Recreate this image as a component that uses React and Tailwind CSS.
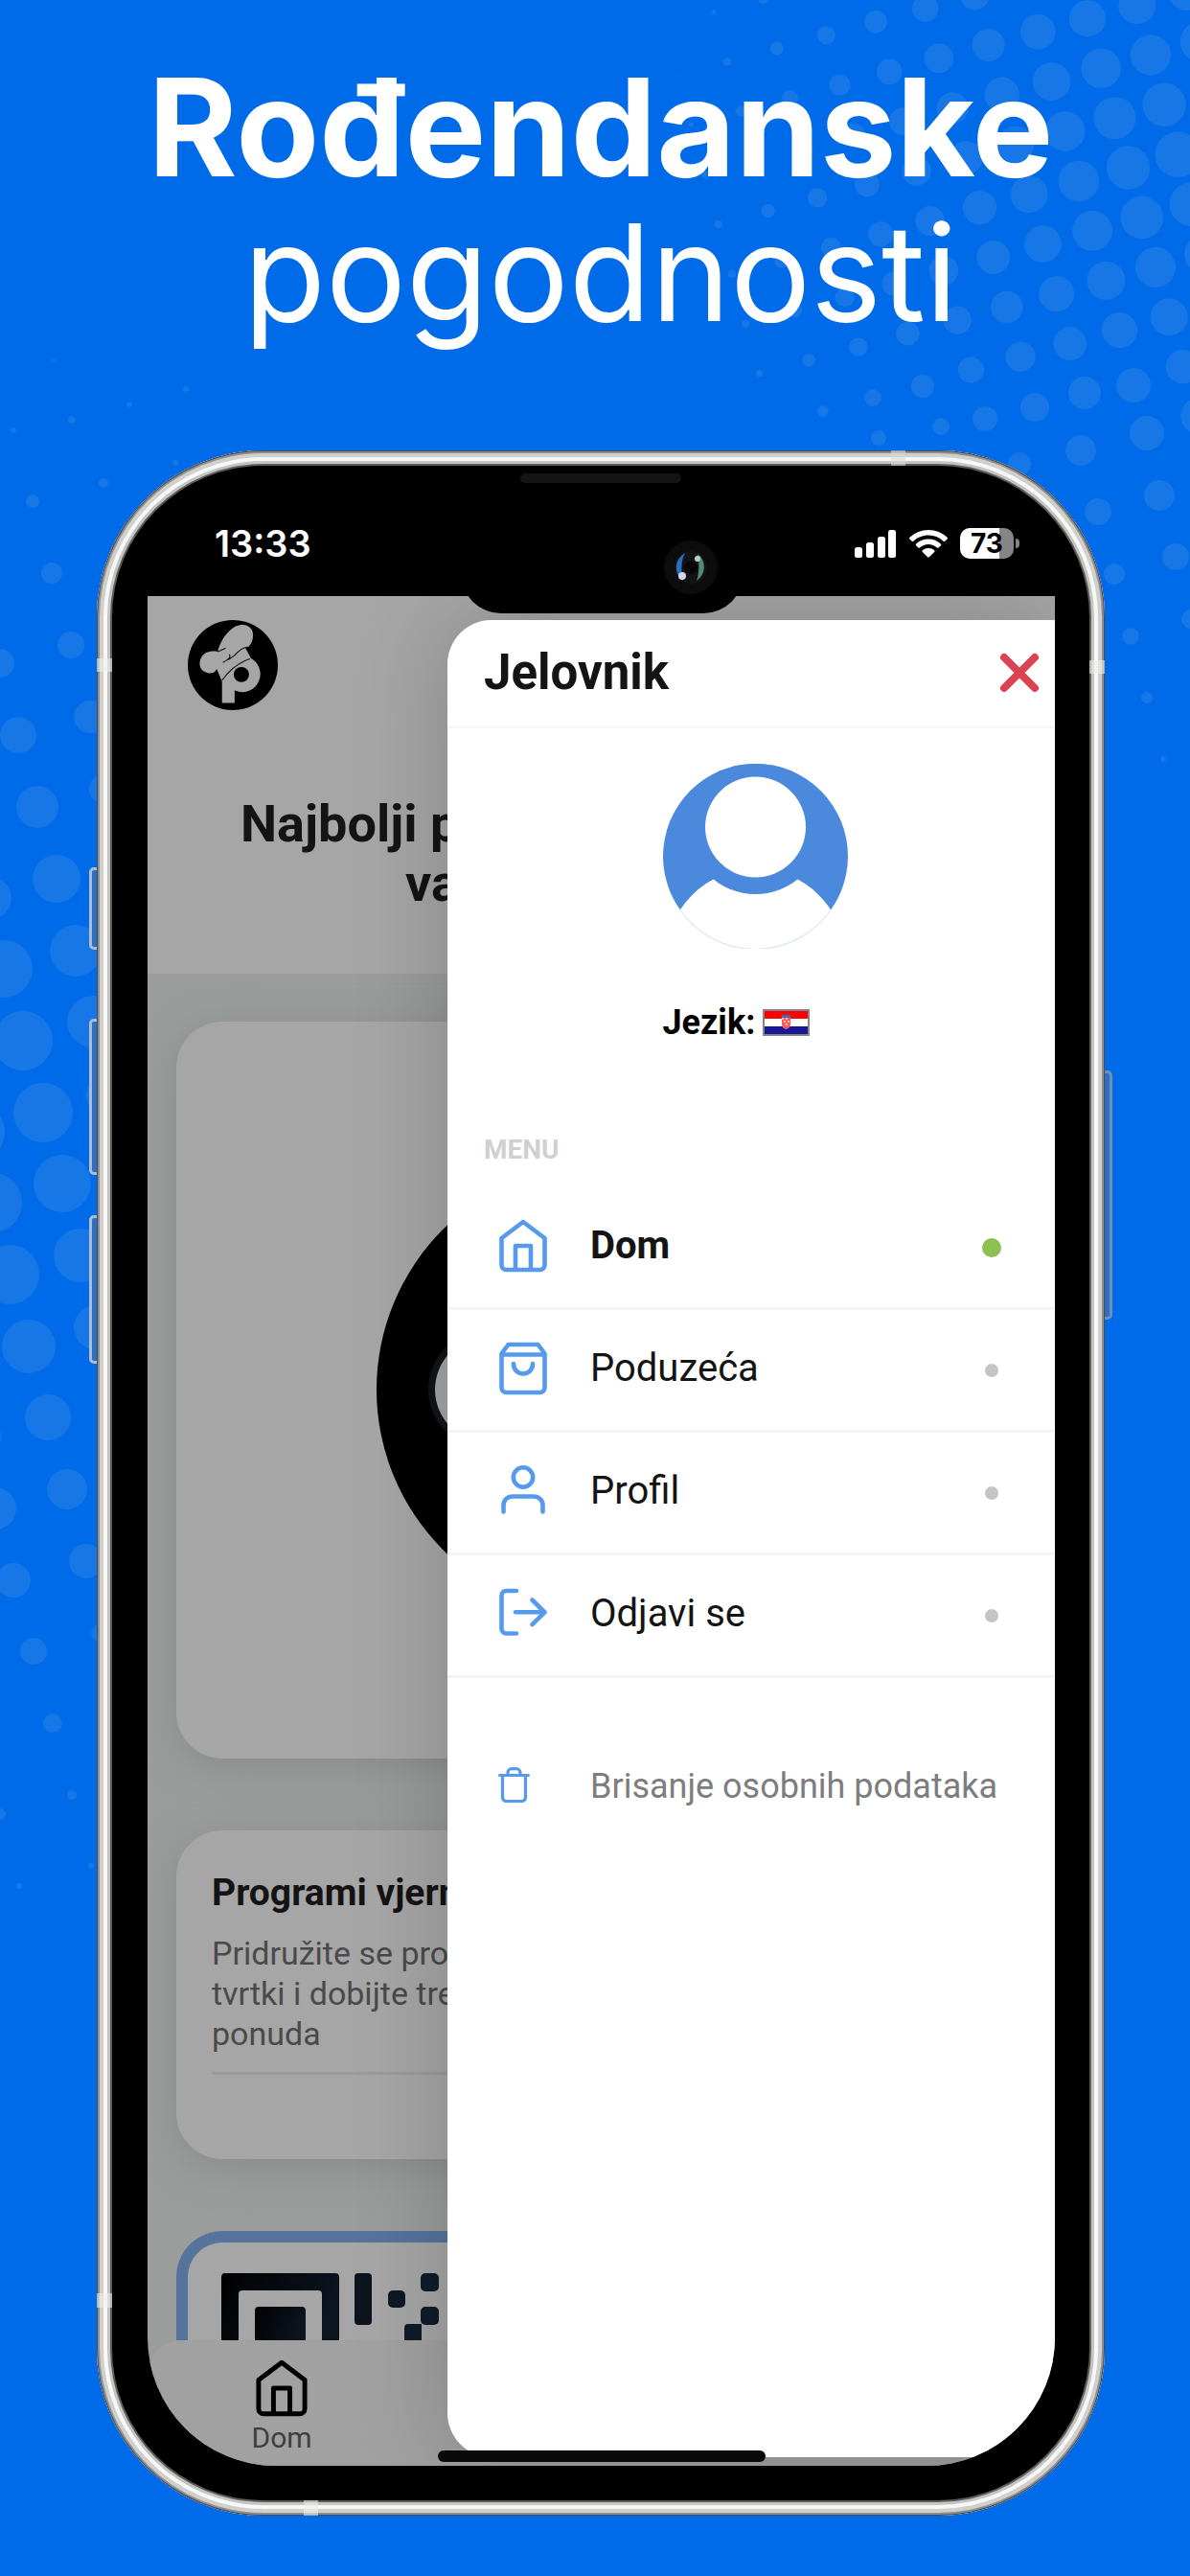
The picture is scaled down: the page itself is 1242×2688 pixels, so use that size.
import React from "react";

/* ---------- background halftone ---------- */

function latticeDots() {
  const dots = [];
  for (let j = -2; j < 9; j++) {
    for (let i = -6; i < 10; i++) {
      const x = 862.3 + i * 51.7 + j * 14.2;
      const y = 36.7 - i * 13.85 + j * 51.9;
      if (x < 680 || x > 1270 || y < -25 || y > 396) continue;
      const d = Math.hypot(x - 1235, y - 165);
      const r = 24 - 0.0196 * d - 0.0000432 * d * d;
      if (r > 1) dots.push([x, y, r]);
    }
  }
  return dots;
}

const lowerRightDots = [
  [963, 403, 12], [911, 415, 9], [859, 429, 6], [1080, 425, 15], [1132, 410, 17], [1183, 402, 18],
  [1028, 437, 13], [917, 457, 8], [982, 445, 9], [1197, 452, 18], [1250, 434, 18], [1128, 470, 16],
  [1064, 484, 12], [1210, 517, 16], [1146, 534, 14], [1227, 581, 14], [1163, 599, 11],
  [1243, 646, 10], [1180, 664, 9], [1197, 728, 6], [1214, 792, 3],
];

const leftDots = [
  [56, 376, 2], [194, 406, 3], [135, 422, 3], [75, 438, 4], [14, 449, 3],
  [34, 523, 7], [108, 504, 5], [183, 483, 3], [54, 598, 11], [74, 673, 14], [94, 748, 17],
  [0, 692, 15], [19, 767, 19], [39, 842, 22], [59, 917, 25], [79, 992, 27], [97, 1066, 27],
  [-10, 937, 22], [4, 1011, 30], [24, 1086, 31], [45, 1161, 31], [65, 1235, 30], [84, 1310, 28],
  [100, 1385, 23], [-26, 1181, 31], [-8, 1255, 31], [10, 1330, 31], [30, 1405, 28], [50, 1479, 24],
  [70, 1554, 21], [90, 1629, 18], [108, 823, 15], [110, 1143, 20], [-5, 1574, 22], [14, 1649, 18],
  [35, 1723, 14], [55, 1798, 10], [75, 1873, 5], [95, 1947, 3], [0, 1893, 6], [20, 1968, 3],
  [104, 1704, 9], [-22, 1499, 23],
];

function Backdrop() {
  const dots = [...latticeDots(), ...lowerRightDots, ...leftDots];
  return (
    <svg className="absolute left-0 top-0 -z-10" width="1242" height="2688" viewBox="0 0 1242 2688" fill="#1777e6" aria-hidden="true">
      {dots.map(([x, y, r], n) => (
        <circle key={n} cx={x} cy={y} r={r} />
      ))}
    </svg>
  );
}

/* ---------- icons ---------- */

function HomeIcon({ className }) {
  return (
    <svg className={className} viewBox="0 0 50 56" fill="none" stroke="currentColor" strokeWidth="4.6" strokeLinejoin="round" aria-hidden="true">
      <path d="M2.5 20 25 3l22.500 17v28a5 5 0 0 1-5 5h-35a5 5 0 0 1-5-5z" />
      <path d="M17 53V28h16v25" />
    </svg>
  );
}

function BagIcon({ className }) {
  return (
    <svg className={className} viewBox="0 0 50 56" fill="none" stroke="currentColor" strokeWidth="4.600" strokeLinejoin="round" strokeLinecap="round" aria-hidden="true">
      <path d="M2.500 12.500 9.500 3h31l7 9.500V48a5 5 0 0 1-5 5h-35a5 5 0 0 1-5-5z" />
      <path d="M3 13.500h44" />
      <path d="M15 23c0 6.500 4.500 10.500 10 10.500S35 29.500 35 23" />
    </svg>
  );
}

function UserIcon({ className }) {
  return (
    <svg className={className} viewBox="0 0 50 56" fill="none" stroke="currentColor" strokeWidth="4.6" strokeLinecap="round" aria-hidden="true">
      <circle cx="25" cy="13.500" r="10.200" />
      <path d="M4.500 49.500V43c0-5.500 4-9.500 9.500-9.500h22c5.500 0 9.500 4 9.500 9.500v6.500" />
    </svg>
  );
}

function LogoutIcon({ className }) {
  return (
    <svg className={className} viewBox="0 0 50 56" fill="none" stroke="currentColor" strokeWidth="4.6" strokeLinecap="round" strokeLinejoin="round" aria-hidden="true">
      <path d="M18 4H7.500a5 5 0 0 0-5 5v34.500a5 5 0 0 0 5 5H18" />
      <path d="M17 26.300h30.500M34.500 13.500l13 12.800-13 12.800" />
    </svg>
  );
}

function TrashIcon({ className }) {
  return (
    <svg className={className} viewBox="0 0 33 37" fill="none" stroke="currentColor" strokeWidth="3.2" strokeLinecap="round" strokeLinejoin="round" aria-hidden="true">
      <path d="M1.600 8.500h29.800" />
      <path d="M4.500 9v22.500a4 4 0 0 0 4 4h16a4 4 0 0 0 4-4V9" />
      <path d="M10 8V5.600a4 4 0 0 1 4-4h5a4 4 0 0 1 4 4V8" />
    </svg>
  );
}

function BrandLogo({ className }) {
  return (
    <svg className={className} viewBox="0 0 100 100" role="img" aria-label="Logo">
      <circle cx="50" cy="50" r="50" fill="#000" />
      <path d="M38 61h14v31H38z" fill="#a6a6a6" />
      <circle cx="60.500" cy="60" r="20" fill="#a6a6a6" />
      <path d="M33 35C37 22 44 12 53 7c8-4 17-1 19 6 1 6 0 13-5 17l-3 1 6 11c-12 4-22 12-32 26l-6-14c-1 5-7 6-12 4-6-2-8-8-6-14 3-9 12-10 19-9z" fill="#a6a6a6" />
      <path d="M33 35c3-1 5-2 9-4M67 30c-4 0-8 2-12 6-3 4-7 6-10 8M46 38c2 3 0 6-7 9M38 67c9-13 19-20 31-24" fill="none" stroke="#111" strokeWidth="1.200" />
      <circle cx="59.500" cy="60.500" r="8.500" fill="#000" />
    </svg>
  );
}

function Avatar() {
  return (
    <svg className="block h-[193px] w-[193px]" viewBox="0 0 193 193" role="img" aria-label="Profil">
      <defs>
        <clipPath id="face"><circle cx="96.500" cy="96.500" r="96.500" /></clipPath>
      </defs>
      <g clipPath="url(#face)">
        <rect width="193" height="193" fill="#4a89dc" />
        <circle cx="96.500" cy="203" r="93.500" fill="#fff" />
        <circle cx="96.500" cy="66" r="70" fill="#4a89dc" />
        <circle cx="96.500" cy="66" r="52.500" fill="#fff" />
      </g>
      <path d="M18 153a96 96 0 0 0 157 0" fill="none" stroke="#dfe9f9" strokeWidth="1" />
    </svg>
  );
}

function Flag() {
  return (
    <svg className="block h-7 w-[49px]" viewBox="0 0 49 28" role="img" aria-label="Hrvatski">
      <rect width="49" height="28" fill="#858585" />
      <rect x="2" y="2" width="45" height="8" fill="#fe0000" />
      <rect x="2" y="10" width="45" height="8" fill="#fff" />
      <rect x="2" y="18" width="45" height="8" fill="#171796" />
      <path d="M20 8h9v8c0 3-2 4-4.500 5-2.500-1-4.500-2-4.500-5z" fill="#ff5a5a" />
      <path d="M20 9h2v2h-2zM24 9h2v2h-2zM22 12h2v2h-2zM26 12h2v2h-2zM24 15h2v2h-2z" fill="#fff" opacity=".6" />
      <path d="M19 6l1.500 3h8L30 6l-2 .5-1-1-1.500 1-1-1-1 1-1.500-1-1 1z" fill="#3f6fa8" />
    </svg>
  );
}

function StatusIcons() {
  return (
    <div className="flex items-center gap-[13px]">
      <svg className="h-[29px] w-11" viewBox="0 0 44 29" fill="#fff" aria-hidden="true">
        <rect x="0" y="18" width="8" height="11" rx="2.500" />
        <rect x="12" y="13" width="8" height="16" rx="2.500" />
        <rect x="24" y="7" width="8" height="22" rx="2.500" />
        <rect x="35" y="0" width="8" height="29" rx="2.500" />
      </svg>
      <svg className="h-[29px] w-10" viewBox="0 0 40 29" fill="#fff" aria-hidden="true">
        <path d="M20 0c7.600 0 14.500 3 19.600 7.800.5.500.5 1.200 0 1.700l-2.300 2.200c-.5.500-1.200.5-1.700 0A22.800 22.800 0 0 0 20 5.500c-6 0-11.500 2.300-15.600 6.200-.5.500-1.200.5-1.700 0L.4 9.500c-.5-.5-.5-1.200 0-1.700A28.500 28.500 0 0 1 20 0z" />
        <path d="M20 9.500c5 0 9.500 1.900 12.900 5 .5.500.5 1.200 0 1.700l-2.400 2.300c-.4.400-1.100.4-1.600 0a13 13 0 0 0-17.800 0c-.5.400-1.200.4-1.600 0l-2.400-2.300c-.5-.5-.5-1.200 0-1.700a19 19 0 0 1 12.900-5z" />
        <path d="M20 19c2.400 0 4.500.8 6.200 2.300.5.500.5 1.200 0 1.700l-5.400 5.200c-.4.400-1.200.4-1.600 0L13.800 23c-.5-.5-.5-1.200 0-1.700A9.300 9.300 0 0 1 20 19z" />
      </svg>
      <div className="flex items-center gap-[2px]">
        <div className="flex h-8 w-14 items-center justify-center rounded-[10px] bg-linear-to-r from-white from-73% to-[#858585] to-73% font-[Inter] text-[28px] font-bold text-black">73</div>
        <div className="h-[10px] w-1 rounded-r-full bg-[#858585]" />
      </div>
    </div>
  );
}

function Camera() {
  return (
    <svg className="absolute left-[576px] top-[78px] h-14 w-14" viewBox="0 0 56 56" aria-hidden="true">
      <circle cx="28" cy="28" r="28" fill="#0c0c0d" />
      <circle cx="28" cy="28" r="17" fill="#131316" />
      <path d="M22 13a17 17 0 0 0-2 29c-2-8-3-20 2-29z" fill="#2c6db8" />
      <path d="M35 14a17 17 0 0 1-1 28c3-8 3-20 1-28z" fill="#4f8c75" />
      <circle cx="28" cy="28" r="7" fill="#060606" />
      <circle cx="19" cy="37" r="4" fill="#d9d3ee" />
      <circle cx="35" cy="19" r="3" fill="#b5d3c6" />
    </svg>
  );
}

/* ---------- page behind the drawer ---------- */

function QrCode() {
  return (
    <svg className="block h-[70px] w-[245px]" viewBox="0 0 245 70" aria-hidden="true">
      <defs>
        <linearGradient id="qr" x1="0" y1="0" x2="1" y2="0.300">
          <stop offset="0" stopColor="#000" />
          <stop offset="1" stopColor="#0c1420" />
        </linearGradient>
      </defs>
      <g fill="url(#qr)">
        <path d="M4 0h115a4 4 0 0 1 4 4v66h-18V22a4 4 0 0 0-4-4H22a4 4 0 0 0-4 4v48H0V4a4 4 0 0 1 4-4z" />
        <path d="M39 35h45a4 4 0 0 1 4 4v31H35V39a4 4 0 0 1 4-4z" />
      </g>
      <rect x="139" y="0" width="18" height="54" rx="4" fill="#0c1420" />
      <rect x="174" y="18" width="18" height="18" rx="5" fill="#0f1925" />
      <rect x="208" y="0" width="19" height="19" rx="5" fill="#101c2a" />
      <rect x="208" y="35" width="19" height="19" rx="5" fill="#101c2a" />
      <path d="M195 53h14v17h-18V57a4 4 0 0 1 4-4z" fill="#101c2a" />
    </svg>
  );
}

function HomePage() {
  return (
    <div className="bg-[#9a9d9b] font-[Roboto,sans-serif] text-[#141414]">
      <header className="h-[394px] bg-[#a6a6a6] pl-[42px] pt-[25px]">
        <BrandLogo className="h-[94px] w-[94px]" />
        <h2 className="mt-[88px] pl-[55px] text-[54px] font-bold leading-[62px]">
          Najbolji p
          <span className="block pl-[172px]">va</span>
        </h2>
      </header>

      <section className="pl-[30px] pt-[50px]">
        <article className="h-[769px] overflow-hidden rounded-l-[48px] bg-[#a6a6a6] pl-[209px] pt-[148px] shadow-[0_8px_44px_#868b88]">
          <svg className="h-[472px] w-[472px]" viewBox="0 0 472 472" aria-hidden="true">
            <circle cx="236" cy="236" r="236" />
            <circle cx="116" cy="236" r="62" fill="#101618" />
            <circle cx="116" cy="236" r="55" fill="#a6a6a6" />
          </svg>
        </article>

        <article className="mt-[75px] h-[343px] rounded-l-[48px] bg-[#a6a6a6] pl-[37px] pt-[40px] shadow-[0_8px_44px_#868b88]">
          <h3 className="text-[39px] font-bold leading-[50px]">Programi vjern</h3>
          <p className="mt-[17px] text-[34px] leading-[42px] text-[#4a4a4a]">
            Pridružite se pro<br />tvrtki i dobijte tre<br />ponuda
          </p>
          <hr className="mt-[19px] border-t-[3px] border-[#9b9b9b]" />
        </article>

        <article className="mt-[75px] h-[114px] overflow-hidden rounded-tl-[48px] border-l-[12px] border-t-[12px] border-[#56739e] bg-[#a6a6a6] pl-[35px] pt-8">
          <QrCode />
        </article>
      </section>

      <nav className="h-[131px] rounded-tl-[36px] bg-[#a1a1a1] pl-[109px] pt-5">
        <a href="#dom" className="flex w-[62px] flex-col items-center text-[30px] leading-9 text-[#3f3f3f]">
          <HomeIcon className="h-[60px] w-[54px] text-black" />
          <span className="mt-1">Dom</span>
        </a>
      </nav>
    </div>
  );
}

/* ---------- drawer ---------- */

const items = [
  { label: "Dom", Icon: HomeIcon, active: true },
  { label: "Poduzeća", Icon: BagIcon },
  { label: "Profil", Icon: UserIcon },
  { label: "Odjavi se", Icon: LogoutIcon },
];

function Drawer() {
  return (
    <aside className="absolute bottom-[9px] left-[313px] right-0 top-[25px] overflow-hidden rounded-l-[46px] bg-white font-[Roboto,sans-serif] text-[#141414] shadow-[0_0_100px_rgba(0,0,0,0.2)]">
      <header className="flex h-[113px] items-center justify-between border-b-[3px] border-[#f7f7f7] pl-[38px] pr-[16px]">
        <h2 className="text-[51px] font-bold leading-[60px]">Jelovnik</h2>
        <button type="button" aria-label="Zatvori" className="text-[#dc4351]">
          <svg className="block h-[42px] w-[42px]" viewBox="0 0 42 42" fill="none" stroke="currentColor" strokeWidth="8" strokeLinecap="round" aria-hidden="true">
            <path d="M5 5l32 32M37 5l-32 32" />
          </svg>
        </button>
      </header>

      <div className="pl-2 pt-[37px]">
        <div className="mx-auto w-[193px]">
          <Avatar />
          <button type="button" className="mt-[61px] flex items-center gap-2 text-[36px] font-bold leading-8 text-black">
            Jezik:
            <Flag />
          </button>
        </div>
      </div>

      <nav className="mt-[97px]">
        <h3 className="mb-[19px] pl-[38px] text-[28px] font-bold leading-10 text-[#d0d0d0]">MENU</h3>
        {items.map(({ label, Icon, active }) => (
          <a key={label} href="#menu" className="flex h-32 items-center border-b-[3px] border-[#f4f4f4] pb-1 pl-[54px] pr-[56px] text-[40px]">
            <Icon className="h-14 w-[50px] text-[#569aee]" />
            <span className={active ? "ml-[45px] flex-1 font-bold" : "ml-[45px] flex-1"}>{label}</span>
            <span className="flex w-5 justify-center pt-1">
              <span className={active ? "h-5 w-5 rounded-full bg-[#8cc152]" : "h-[14px] w-[14px] rounded-full bg-[#c4c4c4]"} />
            </span>
          </a>
        ))}
        <a href="#brisanje" className="mt-[84px] flex h-[58px] items-center pl-[53px] text-[36px] text-[#7d7d7d]">
          <TrashIcon className="mb-1 h-[37px] w-[33px] text-[#569aee]" />
          <span className="ml-[63px]">Brisanje osobnih podataka</span>
        </a>
      </nav>
    </aside>
  );
}

/* ---------- phone ---------- */

function Phone({ children }) {
  return (
    <div className="relative mt-[110px]">
      <div className="absolute -left-2 top-[435px] h-[86px] w-4 rounded-[5px] border-[3px] border-[#aebdd0] bg-[#2f6fc0]" />
      <div className="absolute -left-2 top-[593px] h-[163px] w-4 rounded-[5px] border-[3px] border-[#aebdd0] bg-[#2f6fc0]" />
      <div className="absolute -left-2 top-[798px] h-[155px] w-4 rounded-[5px] border-[3px] border-[#aebdd0] bg-[#2f6fc0]" />
      <div className="absolute -right-2 top-[647px] h-[260px] w-4 rounded-[5px] border-[3px] border-[#6f8fb8] bg-[#2f6fc0]" />
      <div className="relative overflow-hidden rounded-[174px] bg-[#5c5c5c] p-4 shadow-[inset_0_0_0_1px_#454b55,inset_0_0_0_3px_#8f8f8f,inset_0_0_0_7px_#cfd0ce,inset_0_0_0_11px_#f7f8f6,inset_0_0_0_14px_#c4c4c0,inset_0_0_0_16px_#5c5c5c]">
        <div className="absolute left-0 top-[217px] h-[14px] w-4 bg-[#eeeeea]/60" />
        <div className="absolute right-0 top-[219px] h-[14px] w-4 bg-[#eeeeea]/60" />
        <div className="absolute left-0 top-[1923px] h-[15px] w-4 bg-[#eeeeea]/60" />
        <div className="absolute right-[208px] top-0 h-4 w-[15px] bg-[#d9d9d6]/60" />
        <div className="absolute bottom-0 left-[216px] h-4 w-[15px] bg-[#eeeeea]/60" />
        <div className="relative rounded-[158px] bg-black pb-9 pl-[37px] pr-9">
          <div className="absolute left-1/2 top-[8px] h-[10px] w-[168px] -translate-x-1/2 rounded-full bg-[#141414]" />
          <div className="flex h-[136px] items-center justify-between pl-[70px] pr-[37px] pt-[26px]">
            <time className="font-[Inter] text-[38px] font-semibold leading-10 text-white">13:33</time>
            <StatusIcons />
          </div>
          <div className="relative overflow-hidden rounded-b-[134px]">
            {children}
          </div>
          <div className="absolute left-[364px] top-[100px] h-[54px] w-[295px] rounded-b-[42px] bg-black" />
          <Camera />
        </div>
      </div>
    </div>
  );
}

export default function App() {
  return (
    <main className="relative isolate min-h-screen overflow-hidden bg-[#006be9] pb-[65px] pl-[101px] pr-[89px]">
      <Backdrop />
      <h1 className="pt-[56px] text-center font-[Inter,sans-serif] text-[142px] font-bold leading-[152px] text-white">
        Rođendanske
        <span className="block text-[140px] font-normal">pogodnosti</span>
      </h1>
      <Phone>
        <HomePage />
        <Drawer />
        <div className="absolute bottom-1 left-[303px] h-3 w-[342px] rounded-full bg-[#0a0a0a]" />
      </Phone>
    </main>
  );
}
